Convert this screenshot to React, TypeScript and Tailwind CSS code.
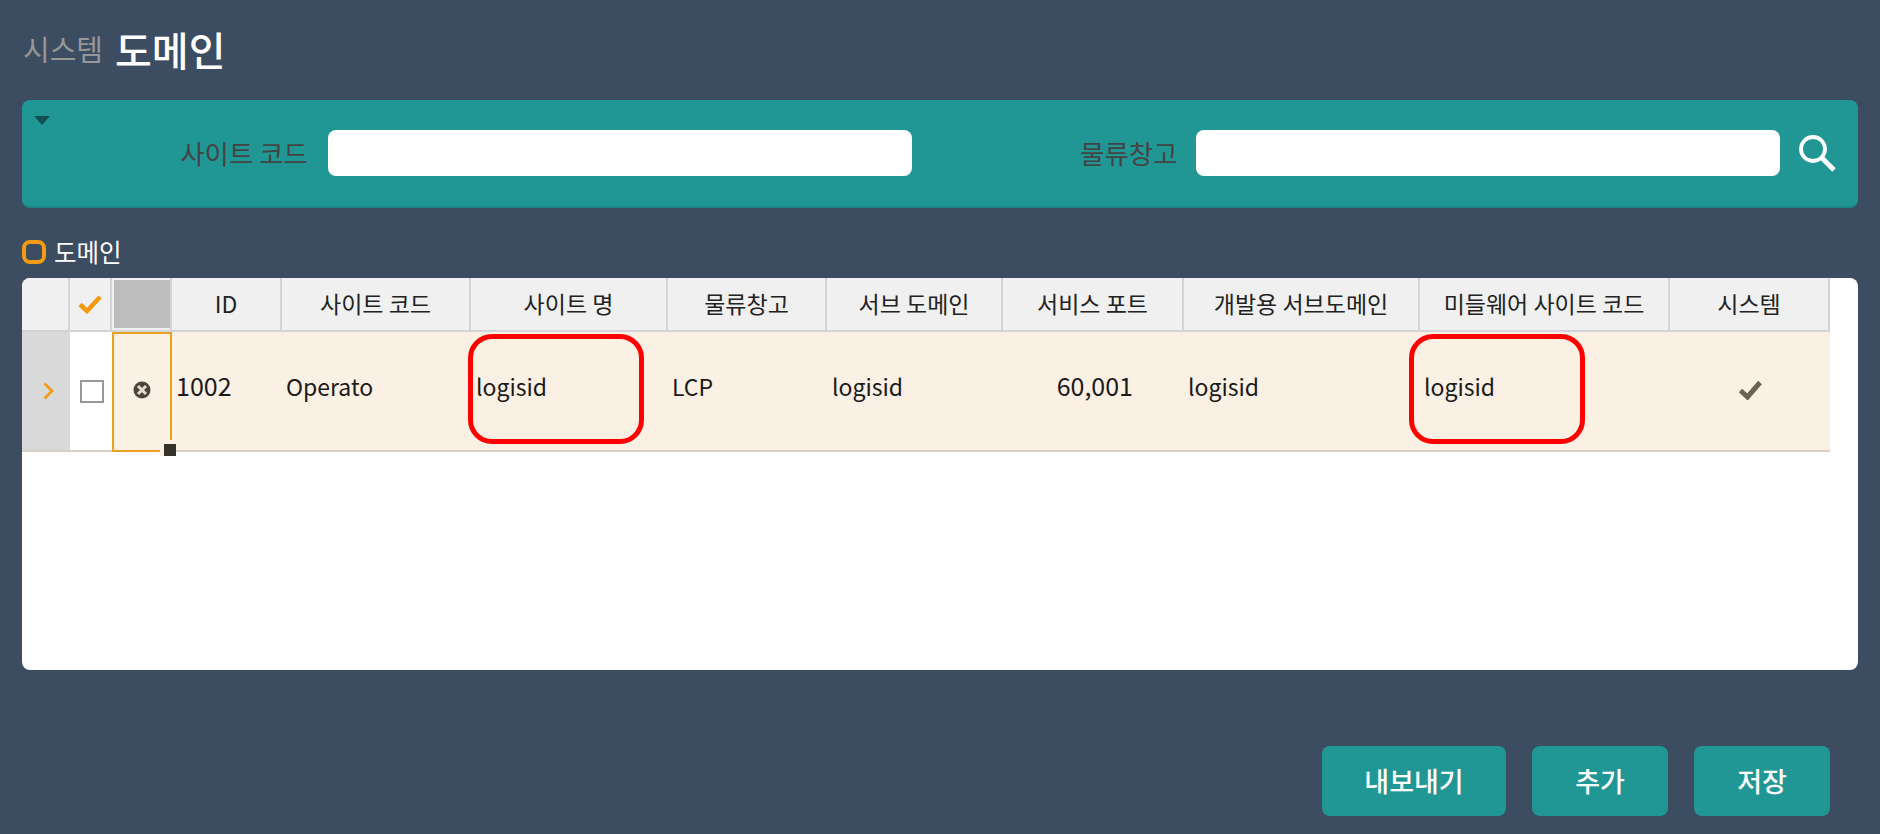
const GRID_COLS = "grid grid-cols-[48px_42px_60px_110px_189px_197px_159px_176px_181px_236px_250px_160px] w-[1808px]";

const headers = ["ID", "사이트 코드", "사이트 명", "물류창고", "서브 도메인", "서비스 포트", "개발용 서브도메인", "미들웨어 사이트 코드", "시스템"];

function HeaderCell({ label }: { label: string }) {
  return (
    <div className="flex items-center justify-center border-r-2 border-[#d2d4da] bg-[#f0f0f0] pb-[2px] text-[23px] text-[#222]">
      {label}
    </div>
  );
}

function RedBox({ className }: { className: string }) {
  return <div className={`absolute rounded-[24px] border-[5px] border-[#ff0000] ${className}`} />;
}

function SearchField({ label, labelWidth }: { label: string; labelWidth: string }) {
  return (
    <div className="flex items-center">
      <label className={`whitespace-nowrap text-right text-[26.5px] text-[#444] ${labelWidth}`}>{label}</label>
      <input readOnly value="" className="ml-5 h-[46px] w-[584px] rounded-lg bg-white" />
    </div>
  );
}

function ActionButton({ label, width }: { label: string; width: string }) {
  return (
    <button className={`h-[70px] rounded-lg bg-[#219795] text-[27px] font-medium text-white ${width}`}>{label}</button>
  );
}

export default function App() {
  return (
    <div className="h-[834px] w-[1880px] overflow-hidden bg-[#3c4c61] px-[22px] font-['Noto_Sans_CJK_KR',sans-serif]">
      <div className="flex h-[100px] items-center pb-[2px]">
        <span className="ml-[1px] text-[29px] text-[#979797]">시스템</span>
        <span className="ml-[12px] text-[40px] font-medium text-white">도메인</span>
      </div>

      <div className="relative flex h-[108px] items-center rounded-lg border-b-2 border-[#1d8583] bg-[#219795] pl-[156px]">
        <svg className="absolute left-[12px] top-[16px] h-[9px] w-[16px]" viewBox="0 0 16 9">
          <path d="M0 0H16L8 9Z" fill="#124f50" />
        </svg>
        <SearchField label="사이트 코드" labelWidth="w-[130px]" />
        <div className="ml-[168px]">
          <SearchField label="물류창고" labelWidth="w-[96px]" />
        </div>
        <svg className="ml-[18px] h-[38px] w-[38px]" viewBox="0 0 38 38" fill="none" stroke="#fff">
          <circle cx="15" cy="15" r="12" strokeWidth="3.8" />
          <path d="M24 24L36 36" strokeWidth="4.8" />
        </svg>
      </div>

      <div className="mt-[32px] flex h-[24px] items-center">
        <span className="h-[24px] w-[24px] rounded-[8px] border-[4px] border-[#f39c12]" />
        <span className="ml-[8px] text-[24.5px] text-white">도메인</span>
      </div>

      <div className="mt-[14px] h-[392px] overflow-hidden rounded-lg bg-white">
        <div className={`${GRID_COLS} h-[54px] border-b-2 border-[#d2d4da] bg-[#f0f0f0]`}>
          <div className="border-r-2 border-[#d2d4da]" />
          <div className="flex items-center justify-center border-r-2 border-[#d2d4da]">
            <svg className="h-[20px] w-[24px]" viewBox="0 0 24 20" fill="none">
              <path d="M2 10.5L9 17L22 3" stroke="#f39c12" strokeWidth="4.6" />
            </svg>
          </div>
          <div className="border-r-2 border-[#d2d4da] px-[1px] py-[2px]">
            <div className="ml-[1px] h-full w-[56px] bg-[#bdbdbd]" />
          </div>
          {headers.map((h) => (
            <HeaderCell key={h} label={h} />
          ))}
        </div>

        <div className={`${GRID_COLS} h-[120px] border-b-2 border-[#d9cfc3] bg-[#faf0e4] text-[23px] text-[#1a1a1a]`}>
          <div className="flex items-center justify-center bg-[#d9d9d9] pl-[5px]">
            <svg className="h-[18px] w-[11px]" viewBox="0 0 11 18" fill="none">
              <path d="M1.5 1.5L9 9L1.5 16.5" stroke="#f39c12" strokeWidth="2.8" />
            </svg>
          </div>
          <div className="flex items-center justify-center bg-white pl-[2px]">
            <span className="h-[23px] w-[24px] border-2 border-[#999] bg-white" />
          </div>
          <div className="relative -mb-[2px] flex items-center justify-center border-2 border-[#e8a01e] pb-[4px]">
            <svg className="h-[18px] w-[18px]" viewBox="0 0 18 18">
              <circle cx="9" cy="9" r="8.5" fill="#4c443a" />
              <path d="M5 5L13 13M13 5L5 13" stroke="#e4dccf" strokeWidth="3" />
            </svg>
            <span className="absolute -bottom-[6px] -right-[6px] h-[16px] w-[16px] border-l-4 border-t-4 border-[#faf0e4] bg-[#37312b]" />
          </div>
          <div className="flex items-center pb-[10px] pl-[4px] text-[25px]">1002</div>
          <div className="flex items-center pb-[10px] pl-[4px]">Operato</div>
          <div className="relative flex items-center pb-[10px] pl-[5px]">
            logisid
            <RedBox className="-left-[3px] top-[2px] h-[110px] w-[176px]" />
          </div>
          <div className="flex items-center pb-[10px] pl-[4px]">LCP</div>
          <div className="flex items-center pb-[10px] pl-[5px]">logisid</div>
          <div className="flex items-center justify-end pb-[10px] pr-[51px] text-[25px]">60,001</div>
          <div className="flex items-center pb-[10px] pl-[4px]">logisid</div>
          <div className="relative flex items-center pb-[10px] pl-[4px]">
            logisid
            <RedBox className="-left-[11px] top-[2px] h-[110px] w-[176px]" />
          </div>
          <div className="flex items-center justify-center pb-[2px]">
            <svg className="h-[20px] w-[25px]" viewBox="0 0 25 20" fill="none">
              <path d="M2.5 10.5L9.5 17L22 2.5" stroke="#6b6256" strokeWidth="5" />
            </svg>
          </div>
        </div>
      </div>

      <div className="mt-[76px] flex justify-end gap-[26px] pr-[28px]">
        <ActionButton label="내보내기" width="w-[184px]" />
        <ActionButton label="추가" width="w-[136px]" />
        <ActionButton label="저장" width="w-[136px]" />
      </div>
    </div>
  );
}
